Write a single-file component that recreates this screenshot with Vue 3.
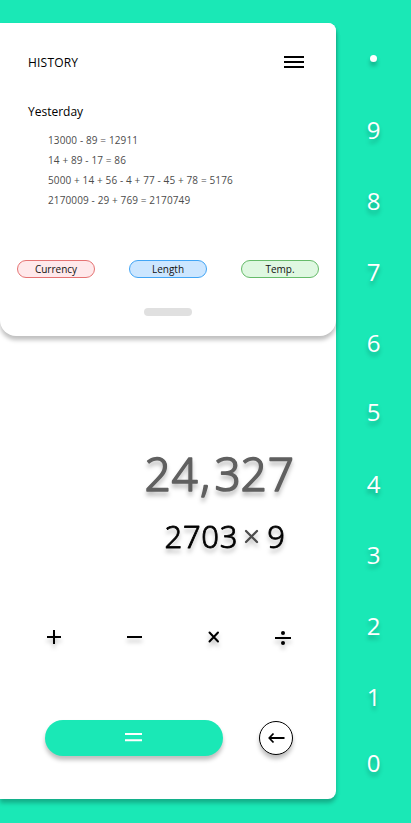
<script setup>
const history = [
  '13000 - 89 = 12911',
  '14 + 89 - 17 = 86',
  '5000 + 14 + 56 - 4 + 77 - 45 + 78 = 5176',
  '2170009 - 29 + 769 = 2170749',
]
const converters = [
  { label: 'Currency', tone: 'red' },
  { label: 'Length', tone: 'blue' },
  { label: 'Temp.', tone: 'green' },
]
const digits = [9, 8, 7, 6, 5, 4, 3, 2, 1, 0]
</script>

<template>
  <div class="app">
    <main class="panel">
      <section class="history">
        <header class="top">
          <h1>HISTORY</h1>
          <svg class="burger" width="20" height="12" viewBox="0 0 20 12">
            <path d="M0 1h20M0 6h20M0 11h20" stroke="#000" stroke-width="2" />
          </svg>
        </header>
        <h2>Yesterday</h2>
        <ul class="entries">
          <li v-for="line in history" :key="line">{{ line }}</li>
        </ul>
        <div class="chips">
          <button v-for="c in converters" :key="c.label" class="chip" :class="c.tone">{{ c.label }}</button>
        </div>
        <div class="handle"></div>
      </section>

      <section class="display">
        <svg class="result" width="156" height="65" viewBox="0 0 156 65">
          <text x="4.500 31.500 60 74.500 100.500 127.800" y="48.500">24,327</text>
        </svg>
        <svg class="expression" width="130" height="44" viewBox="0 0 130 44">
          <text x="4.500 22.900 41.200 59.700" y="33.500">2703</text>
          <path d="M86 17L97 28M97 17L86 28" stroke="#4c4c4c" stroke-width="2.300" stroke-linecap="round" />
          <text x="107.200" y="33.500">9</text>
        </svg>
      </section>

      <div class="operators">
        <svg width="14" height="14" viewBox="0 0 14 14"><path d="M0 7h14M7 0v14" stroke="#000" stroke-width="2" /></svg>
        <svg width="15" height="14" viewBox="0 0 15 14"><path d="M0 7h15" stroke="#000" stroke-width="2" /></svg>
        <svg width="12" height="12" viewBox="0 0 12 12"><path d="M1.500 1.500l8.500 9M10 1.500l-8.500 9" stroke="#000" stroke-width="2" stroke-linecap="round" /></svg>
        <svg class="divide" width="16" height="16" viewBox="0 0 16 16">
          <path d="M0 9h16" stroke="#000" stroke-width="2" />
          <circle cx="8" cy="4" r="2" /><circle cx="8" cy="14" r="2" />
        </svg>
      </div>

      <div class="actions">
        <button class="equals">
          <svg width="17" height="10" viewBox="0 0 17 10"><path d="M0 1h17M0 7.300h17" stroke="#fff" stroke-width="2" /></svg>
        </button>
        <button class="back">
          <svg width="17" height="12" viewBox="0 0 17 12">
            <path d="M1.500 6H16.500M5.500 1.500L1.200 6L5.500 10.500" fill="none" stroke="#000" stroke-width="1.800" stroke-linejoin="round" />
          </svg>
        </button>
      </div>
    </main>

    <aside class="keys">
      <i class="point"></i>
      <span v-for="d in digits" :key="d">{{ d }}</span>
    </aside>
  </div>
</template>

<style>
body {
  background: #1ae8b6;
}
</style>

<style scoped>
.app {
  display: flex;
  width: 411px;
  height: 823px;
  overflow: hidden;
  background: #1ae8b6;
  font-family: "Open Sans", "Noto Sans", sans-serif;
  color: #000;
}
h1, h2, ul {
  margin: 0;
  padding: 0;
  font-weight: 400;
  list-style: none;
}
button {
  margin: 0;
  padding: 0;
  font-family: inherit;
  color: inherit;
}
svg {
  display: block;
}
.panel {
  box-sizing: border-box;
  width: 336px;
  height: 776px;
  margin-top: 23px;
  background: #fff;
  border-radius: 0 8px 8px 0;
  box-shadow: 0 4px 4px rgba(0, 0, 0, 0.25);
}
.history {
  box-sizing: border-box;
  height: 313px;
  padding-top: 30px;
  background: #fff;
  border-radius: 0 8px 16px 16px;
  box-shadow: 0 4px 4px rgba(0, 0, 0, 0.25);
}
.top {
  display: flex;
  align-items: center;
  justify-content: space-between;
  height: 19px;
  padding: 0 32px 0 28px;
}
.burger {
  margin-bottom: 2px;
}
h1 {
  font-size: 12px;
  letter-spacing: 0.200px;
  line-height: 18px;
}
h2 {
  margin: 31px 0 0 28px;
  font-size: 12px;
  line-height: 18px;
}
.entries {
  margin: 9px 0 0 48px;
  font-size: 10px;
  letter-spacing: 0.120px;
  line-height: 20px;
  color: #4c4c4c;
  white-space: nowrap;
}
.chips {
  display: flex;
  justify-content: space-between;
  margin: 50px 17px 0;
}
.chip {
  box-sizing: border-box;
  width: 78px;
  height: 18px;
  border: 1px solid;
  border-radius: 9px;
  font-size: 10px;
  line-height: 15px;
  color: #111;
}
.red {
  background: #ffe9eb;
  border-color: #e57373;
}
.blue {
  background: #cce6ff;
  border-color: #42a5f5;
}
.green {
  background: #dff8e1;
  border-color: #66bb6a;
}
.handle {
  width: 48px;
  height: 8px;
  margin: 30px auto 0;
  border-radius: 4px;
  background: #e0e0e0;
}
.display {
  display: flex;
  flex-direction: column;
  align-items: flex-end;
  height: 293px;
  box-sizing: border-box;
  padding-top: 106px;
}
.display svg {
  overflow: visible;
  font-family: "Noto Sans", sans-serif;
  font-weight: 300;
  stroke-linejoin: round;
  filter: drop-shadow(0 4px 2px rgba(0, 0, 0, 0.25));
}
.result {
  margin-right: 40px;
}
.result text {
  font-size: 46px;
  fill: #606060;
  stroke: #606060;
  stroke-width: 1.500px;
}
.expression {
  margin: 7px 46px 0 0;
}
.expression text {
  font-size: 31px;
  fill: #000;
  stroke: #000;
  stroke-width: 0.800px;
}
.operators {
  display: grid;
  grid-template-columns: 80px 81px 67px 16px;
  align-items: center;
  height: 14px;
  padding-left: 47px;
}
.operators svg {
  filter: drop-shadow(0 4px 2px rgba(0, 0, 0, 0.25));
}
.actions {
  display: flex;
  align-items: center;
  justify-content: space-between;
  height: 36px;
  margin: 77px 43px 0 45px;
}
.equals,
.back {
  display: flex;
  align-items: center;
  justify-content: center;
  box-sizing: border-box;
  border: 0;
  box-shadow: 0 4px 4px rgba(0, 0, 0, 0.25);
}
.equals {
  width: 178px;
  height: 36px;
  padding-right: 1px;
  border-radius: 18px;
  background: #1ae8b6;
}
.back {
  width: 34px;
  height: 34px;
  border: 1px solid #000;
  border-radius: 50%;
  background: #fff;
}
.keys {
  display: grid;
  grid-template-rows: 99px 71px 71px 71px 69px 72px 71px 71px 71px 66px 34px;
  justify-items: center;
  width: 75px;
  padding-top: 14px;
  box-sizing: border-box;
  font-size: 24px;
  line-height: 34px;
  color: #fff;
  text-shadow: 0 4px 4px rgba(0, 0, 0, 0.25);
}
.point {
  width: 7px;
  height: 7px;
  margin-top: 41px;
  border-radius: 50%;
  background: #fff;
  box-shadow: 0 4px 4px rgba(0, 0, 0, 0.25);
}
</style>
